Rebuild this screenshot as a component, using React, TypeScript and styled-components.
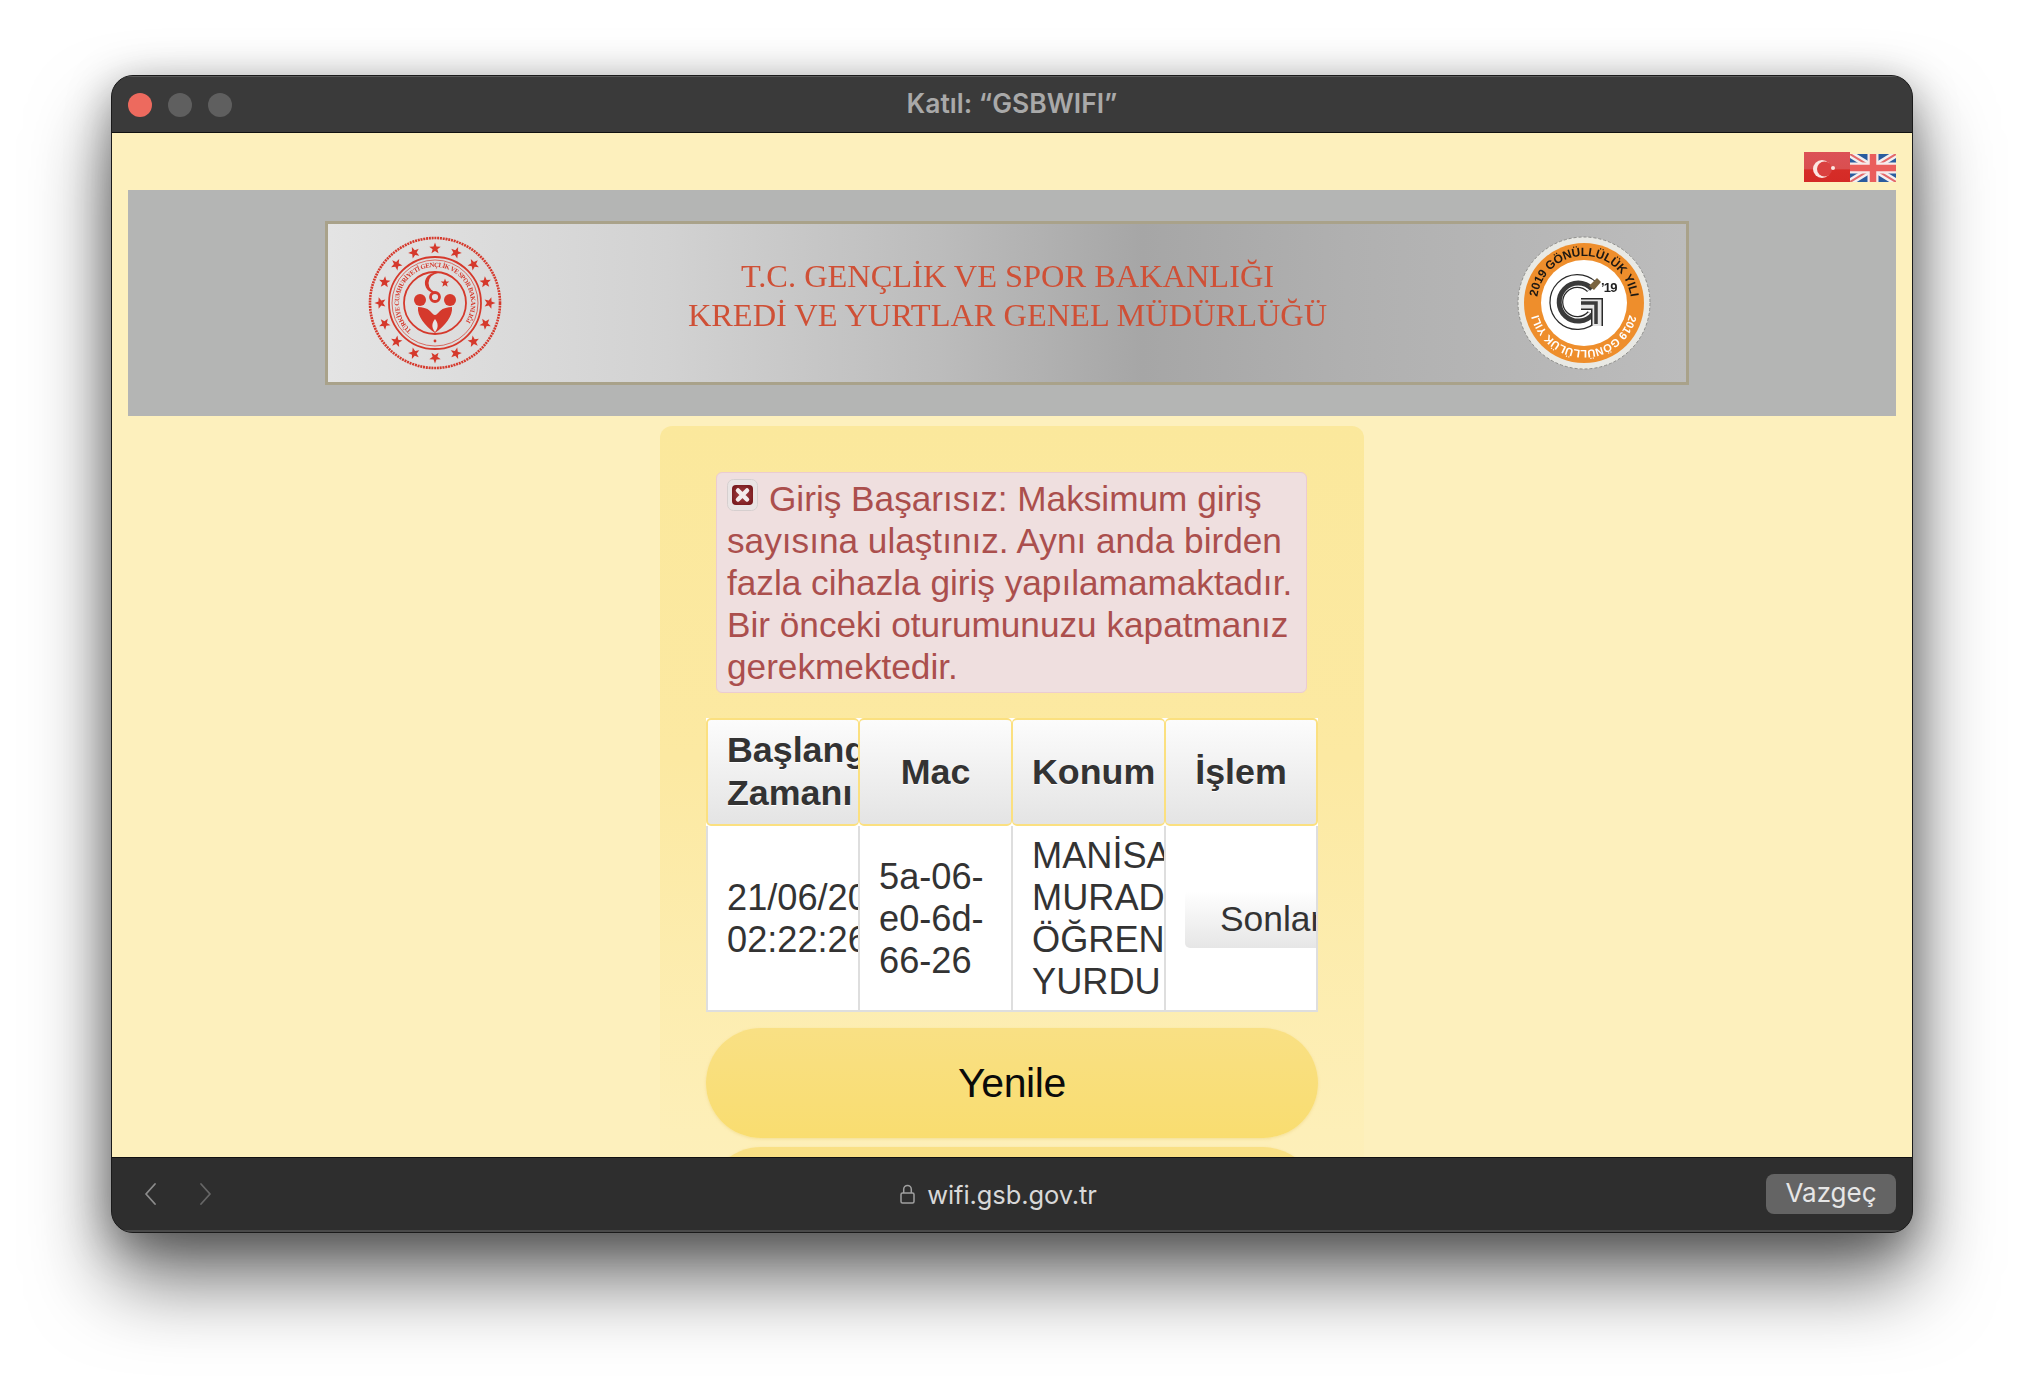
import React from 'react';
import styled, { createGlobalStyle } from 'styled-components';

const GlobalStyle = createGlobalStyle`
  html, body {
    margin: 0;
    padding: 0;
    background: #ffffff;
  }
  * {
    box-sizing: border-box;
  }
`;

const Desktop = styled.div`
  width: 2024px;
  height: 1380px;
  padding: 75px 111px 147px;
  background: #ffffff;
  overflow: hidden;
`;

const Sheet = styled.div`
  width: 1802px;
  height: 1158px;
  display: flex;
  flex-direction: column;
  border: 1px solid #1a1a1a;
  border-radius: 22px;
  overflow: hidden;
  background: #2e2e2e;
  box-shadow: 0 48px 80px rgba(0, 0, 0, 0.55), 0 10px 44px rgba(0, 0, 0, 0.35);
`;

const TitleBar = styled.div`
  height: 57px;
  flex: none;
  display: grid;
  grid-template-columns: 1fr auto 1fr;
  align-items: center;
  padding: 0 16px;
  background: #3a3a3a;
  border-top: 1px solid #5a5a5a;
  border-bottom: 1px solid #111111;
`;

const Lights = styled.div`
  display: flex;
  gap: 16px;
`;

const Light = styled.span<{ $color: string }>`
  width: 24px;
  height: 24px;
  border-radius: 50%;
  background: ${(p) => p.$color};
`;

const Title = styled.div`
  font-family: 'Inter', 'Liberation Sans', sans-serif;
  font-size: 26.5px;
  font-weight: 600;
  color: #a9a9a9;
  margin-top: -4px;
`;

const Content = styled.div`
  flex: 1;
  min-height: 0;
  overflow: hidden;
  background: #fdf0bd;
  padding: 19px 16px 0;
  font-family: 'Liberation Sans', Arial, sans-serif;
`;

const FlagRow = styled.div`
  height: 38px;
  display: flex;
  justify-content: flex-end;
  align-items: flex-end;
  padding-bottom: 8px;
`;

const Banner = styled.div`
  height: 226px;
  display: flex;
  justify-content: center;
  align-items: center;
  background: #b4b5b4;
`;

const BannerPlate = styled.div`
  width: 1364px;
  height: 164px;
  margin-right: 10px;
  display: flex;
  align-items: center;
  justify-content: space-between;
  padding: 0 35px 0 40px;
  border: 3px solid #a9a28a;
  background: linear-gradient(90deg, #e4e4e4 0%, #d2d2d2 25%, #bcbcbc 45%, #a6a6a6 60%, #b0b0b0 75%, #bcbcbc 100%);
`;

const BannerText = styled.div`
  flex: 1;
  text-align: center;
  font-family: 'Liberation Serif', 'Times New Roman', serif;
  font-size: 32.4px;
  line-height: 39px;
  color: #cf5036;
  filter: blur(0.7px);
  padding: 0 4px 14px 0;
  white-space: nowrap;
`;

const LogoSvg = styled.svg`
  flex: none;
  filter: blur(0.5px);
`;

const Card = styled.div`
  width: 704px;
  margin: 10px auto 0;
  padding: 46px 46px 0;
  border-radius: 12px;
  background: linear-gradient(180deg, #fbe89c 0%, #fce9a2 40%, #fdefb8 85%, #fdf0bd 100%);
`;

const Alert = styled.div`
  width: 591px;
  margin: 0 0 25px 10px;
  padding: 5px 10px 4px;
  border: 1px solid #ebccd1;
  border-radius: 6px;
  background: #efdfdf;
  color: #ab4f4d;
  font-size: 35.2px;
  line-height: 42px;
`;

const AlertIcon = styled.svg`
  width: 31px;
  height: 32px;
  margin-right: 11px;
  vertical-align: baseline;
  filter: blur(0.5px);
`;

const SessionTable = styled.table`
  width: 612px;
  table-layout: fixed;
  border-collapse: separate;
  border-spacing: 0;
  background: #fff;
`;

const HeadCell = styled.th`
  height: 108px;
  padding: 0 19px;
  overflow: hidden;
  white-space: nowrap;
  border: 2px solid #fbe080;
  border-width: 2px 1px;
  border-radius: 5px;
  background: linear-gradient(180deg, #fcfcfc 0%, #e4e4e4 100%);
  color: #333;
  font-size: 35.8px;
  line-height: 43px;
  font-weight: 700;
  text-align: center;
  text-shadow: 0 1px 0 #fff;
  vertical-align: middle;

  &:first-child {
    border-left-width: 2px;
  }
  &:last-child {
    border-right-width: 2px;
  }
`;

const Cell = styled.td`
  height: 186px;
  padding: 2px 19px 0;
  overflow: hidden;
  white-space: nowrap;
  border: 1px solid #dedede;
  border-top: none;
  border-bottom-width: 2px;
  background: #fff;
  color: #333;
  font-size: 36.2px;
  line-height: 42px;
  vertical-align: middle;

  &:first-child {
    border-left-width: 2px;
  }
  &:last-child {
    border-right-width: 2px;
  }
`;

const EndButton = styled.button`
  width: 210px;
  height: 57px;
  margin: 0;
  padding: 0 0 0 35px;
  display: block;
  border: none;
  border-radius: 5px 0 0 5px;
  background: linear-gradient(180deg, #ffffff 0%, #e6e6e6 100%);
  color: #333;
  font: 35.4px/42px 'Liberation Sans', Arial, sans-serif;
  text-align: left;
  white-space: nowrap;
  overflow: hidden;
`;

const PillButton = styled.button`
  width: 612px;
  height: 110px;
  display: block;
  margin: 16px 0 9px;
  border: none;
  border-radius: 55px;
  background: linear-gradient(180deg, #f9e084 0%, #f9dd70 100%);
  color: #0a0a0a;
  font: 41px 'Liberation Sans', Arial, sans-serif;
  letter-spacing: -0.4px;
  box-shadow: 0 1px 3px rgba(230, 200, 100, 0.4);
`;

const NextPill = styled(PillButton)`
  margin-top: 0;
`;

const BottomBar = styled.div`
  height: 75px;
  flex: none;
  display: grid;
  grid-template-columns: 1fr auto 1fr;
  align-items: center;
  padding: 0 16px;
  background: #2e2e2e;
  border-top: 1px solid #111111;
  border-bottom: 2px solid #4a4a4a;
`;

const NavButtons = styled.div`
  display: flex;
  align-items: center;
  gap: 42px;
  padding-left: 15px;
`;

const Address = styled.div`
  display: flex;
  align-items: center;
  gap: 12px;
  margin-left: -27px;
  font-family: 'Inter', 'Liberation Sans', sans-serif;
  font-size: 25.5px;
  letter-spacing: -0.1px;
  color: #d8d8d8;
`;

const CancelButton = styled.button`
  justify-self: end;
  width: 130px;
  height: 40px;
  border: none;
  border-radius: 8px;
  background: #646464;
  color: #e6e6e6;
  font: 26px 'Inter', 'Liberation Sans', sans-serif;
  padding: 0 0 3px;
`;

const Stars = ({ cx, cy, r, size, count, fill }: { cx: number; cy: number; r: number; size: number; count: number; fill: string }) => {
  const items = Array.from({ length: count }, (_, i) => {
    const a = (i / count) * Math.PI * 2 - Math.PI / 2;
    const x = cx + r * Math.cos(a);
    const y = cy + r * Math.sin(a);
    const pts = Array.from({ length: 10 }, (_, k) => {
      const b = (k / 10) * Math.PI * 2 - Math.PI / 2 + a + Math.PI / 2;
      const d = k % 2 === 0 ? size : size * 0.42;
      return `${(x + d * Math.cos(b)).toFixed(2)},${(y + d * Math.sin(b)).toFixed(2)}`;
    }).join(' ');
    return <polygon key={i} points={pts} fill={fill} />;
  });
  return <>{items}</>;
};

const MinistryLogo = () => (
  <LogoSvg width="134" height="134" viewBox="0 0 134 134">
    <defs>
      <path id="ministryArc" d="M 67 67 m -36 0 a 36 36 0 1 1 72 0 a 36 36 0 1 1 -72 0" />
    </defs>
    <g fill="none" stroke="#d5392c">
      <circle cx="67" cy="67" r="65" strokeWidth="2.6" strokeDasharray="2 0.8" />
      <circle cx="67" cy="67" r="46" strokeWidth="1.8" />
      <circle cx="67" cy="67" r="43" strokeWidth="1" opacity="0.7" />
      <circle cx="67" cy="67" r="31" strokeWidth="1.8" />
    </g>
    <Stars cx={67} cy={67} r={54.5} size={6} count={16} fill="#d5392c" />
    <g transform="rotate(-50 67 67)">
      <text fontFamily="Liberation Serif, serif" fontSize="6.6" fontWeight="700" fill="#d5392c">
        <textPath href="#ministryArc" textLength="164">TÜRKİYE CUMHURİYETİ GENÇLİK VE SPOR BAKANLIĞI</textPath>
      </text>
    </g>
    <path d="M70 37.5a10 10 0 1 0 0 19 8 8 0 1 1 0-19z" fill="#d5392c" />
    <Stars cx={77} cy={47} r={0} size={4.5} count={1} fill="#d5392c" />
    <circle cx="52" cy="64" r="6" fill="#d5392c" />
    <circle cx="82" cy="64" r="6" fill="#d5392c" />
    <circle cx="67" cy="61" r="4.500" fill="none" stroke="#d5392c" strokeWidth="2.800" />
    <path d="M50 71c4 0 9 1 12 4 2 2 3.500 4 5 4s3-2 5-4c3-3 8-4 12-4 1 9-7 19-17 26-10-7-18-17-17-26z" fill="#d5392c" />
    <path d="M67 83c-3 4-4 8 0 13 4-5 3-9 0-13z" fill="#e6e6e6" />
    <circle cx="67" cy="105" r="1.400" fill="#d5392c" />
  </LogoSvg>
);

const VolunteerLogo = () => (
  <LogoSvg width="134" height="134" viewBox="0 0 134 134">
    <defs>
      <path id="volunteerRing" d="M 20.7 75 a 47 47 0 1 1 92.6 0" />
    </defs>
    <circle cx="67" cy="67" r="66" fill="#e9e9e4" />
    <circle cx="67" cy="67" r="66" fill="none" stroke="#8d8d8a" strokeWidth="1" strokeDasharray="3 2" />
    <circle cx="67" cy="67" r="60" fill="#ee8e2c" />
    <circle cx="67" cy="67" r="43" fill="#ffffff" />
    <text fontFamily="Liberation Sans, sans-serif" fontSize="12" fontWeight="700" fill="#1c1712" letterSpacing="-0.2">
      <textPath href="#volunteerRing" startOffset="50%" textAnchor="middle">2019 GÖNÜLLÜLÜK YILI</textPath>
    </text>
    <g transform="rotate(180 67 67)">
      <text fontFamily="Liberation Sans, sans-serif" fontSize="11" fontWeight="700" fill="#ffffff" letterSpacing="-0.2">
        <textPath href="#volunteerRing" startOffset="50%" textAnchor="middle">2019 GÖNÜLLÜLÜK YILI</textPath>
      </text>
    </g>
    <path d="M75 51A21 21 0 1 0 76 80" fill="none" stroke="#2a2a2a" strokeWidth="14" />
    <path d="M75 51A21 21 0 1 0 76 80" fill="none" stroke="#ffffff" strokeWidth="11.500" />
    <path d="M75 53A19 19 0 1 0 76 78" fill="none" stroke="#3a3a3a" strokeWidth="5" />
    <path d="M64 68H80V90" fill="none" stroke="#2a2a2a" strokeWidth="12" />
    <path d="M64 68H80V90" fill="none" stroke="#e4e4e4" strokeWidth="9" />
    <path d="M64 67H79V88" fill="none" stroke="#3a3a3a" strokeWidth="3.500" />
    <path d="M72 50l8-8 4 4-7 8z" fill="#7a6440" />
    <text x="84" y="56" fontFamily="Liberation Sans, sans-serif" fontSize="13" fontWeight="700" fill="#222" letterSpacing="-0.8">&#8217;19</text>
  </LogoSvg>
);

const TurkishFlag = () => (
  <svg width="46" height="30" viewBox="0 0 46 30">
    <defs>
      <linearGradient id="trSheen" x1="0" y1="0" x2="0" y2="1">
        <stop offset="0" stopColor="#dc5157" />
        <stop offset="0.55" stopColor="#d94f50" />
        <stop offset="0.6" stopColor="#d62d28" />
        <stop offset="1" stopColor="#d42a26" />
      </linearGradient>
    </defs>
    <rect width="46" height="30" fill="url(#trSheen)" />
    <circle cx="18" cy="17" r="9" fill="#fbe6e2" />
    <circle cx="20.500" cy="17" r="7.500" fill="#da4040" />
    <circle cx="29" cy="16" r="2" fill="#fbe6e2" />
  </svg>
);

const BritishFlag = () => (
  <svg width="46" height="28" viewBox="0 0 46 28" style={{ filter: 'blur(0.4px)' }}>
    <rect width="46" height="28" fill="#2a5c9e" />
    <path d="M0 0L46 28M46 0L0 28" stroke="#f4f0f0" strokeWidth="7" />
    <path d="M0 0L46 28M46 0L0 28" stroke="#e46a6a" strokeWidth="2" />
    <path d="M23 0V28M0 14H46" stroke="#f6eaea" strokeWidth="11" />
    <path d="M23 0V28M0 14H46" stroke="#ea5e5c" strokeWidth="6.500" />
  </svg>
);

const FailIcon = () => (
  <AlertIcon viewBox="0 0 31 32">
    <defs>
      <radialGradient id="failFill" cx="0.5" cy="0.5" r="0.7">
        <stop offset="0" stopColor="#a84446" />
        <stop offset="1" stopColor="#6e1216" />
      </radialGradient>
    </defs>
    <rect x="0.500" y="0.500" width="30" height="31" rx="6" fill="#e9e4e4" stroke="#d6cfcf" />
    <rect x="5" y="6" width="21" height="20" rx="4" fill="url(#failFill)" />
    <path d="M11 11.500l9 9M20 11.500l-9 9" stroke="#f4ecec" strokeWidth="4.500" strokeLinecap="round" />
  </AlertIcon>
);

const Chevron = ({ dir, color }: { dir: 'left' | 'right'; color: string }) => (
  <svg width="14" height="24" viewBox="0 0 14 24" fill="none" stroke={color} strokeWidth="1.800" strokeLinecap="round" strokeLinejoin="round">
    <path d={dir === 'left' ? 'M12 2L3 12l9 10' : 'M2 2l9 10L2 22'} />
  </svg>
);

const LockIcon = () => (
  <svg width="15" height="20" viewBox="0 0 15 20" fill="none" stroke="#a0a0a0" strokeWidth="1.500">
    <path d="M3.700 9V5.200a3.800 3.800 0 0 1 7.600 0V9" />
    <rect x="1" y="9" width="13" height="10" rx="1.500" />
  </svg>
);

export default function App() {
  return (
    <>
      <GlobalStyle />
      <Desktop>
        <Sheet>
          <TitleBar>
            <Lights>
              <Light $color="#ed6a5e" />
              <Light $color="#5f5f5f" />
              <Light $color="#5f5f5f" />
            </Lights>
            <Title>Katıl: “GSBWIFI”</Title>
            <span />
          </TitleBar>
          <Content>
            <FlagRow>
              <TurkishFlag />
              <BritishFlag />
            </FlagRow>
            <Banner>
              <BannerPlate>
                <MinistryLogo />
                <BannerText>
                  T.C. GENÇLİK VE SPOR BAKANLIĞI
                  <br />
                  KREDİ VE YURTLAR GENEL MÜDÜRLÜĞÜ
                </BannerText>
                <VolunteerLogo />
              </BannerPlate>
            </Banner>
            <Card>
              <Alert>
                <FailIcon />
                Giriş Başarısız: Maksimum giriş sayısına ulaştınız. Aynı anda birden fazla cihazla giriş yapılamamaktadır. Bir önceki oturumunuzu kapatmanız gerekmektedir.
              </Alert>
              <SessionTable>
                <thead>
                  <tr>
                    <HeadCell>
                      Başlangıç
                      <br />
                      Zamanı
                    </HeadCell>
                    <HeadCell>Mac</HeadCell>
                    <HeadCell>Konum</HeadCell>
                    <HeadCell>İşlem</HeadCell>
                  </tr>
                </thead>
                <tbody>
                  <tr>
                    <Cell>
                      21/06/2021
                      <br />
                      02:22:26
                    </Cell>
                    <Cell>
                      5a-06-
                      <br />
                      e0-6d-
                      <br />
                      66-26
                    </Cell>
                    <Cell>
                      MANİSA
                      <br />
                      MURADİYE
                      <br />
                      ÖĞRENCİ
                      <br />
                      YURDU
                    </Cell>
                    <Cell>
                      <EndButton>Sonlandır</EndButton>
                    </Cell>
                  </tr>
                </tbody>
              </SessionTable>
              <PillButton>Yenile</PillButton>
              <NextPill />
            </Card>
          </Content>
          <BottomBar>
            <NavButtons>
              <Chevron dir="left" color="#8c8c8c" />
              <Chevron dir="right" color="#666666" />
            </NavButtons>
            <Address>
              <LockIcon />
              wifi.gsb.gov.tr
            </Address>
            <CancelButton>Vazgeç</CancelButton>
          </BottomBar>
        </Sheet>
      </Desktop>
    </>
  );
}
